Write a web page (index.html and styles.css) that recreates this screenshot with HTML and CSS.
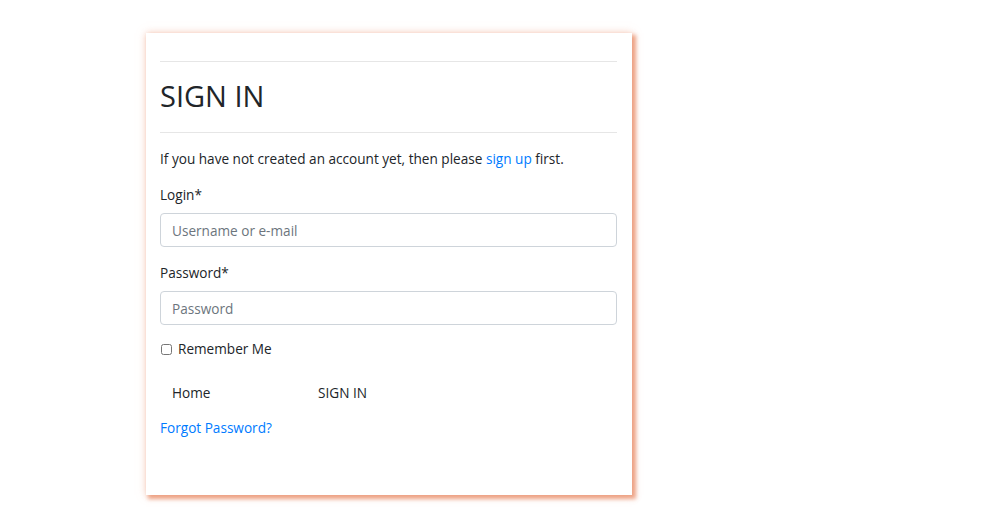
FILE: index.html
```html
<!DOCTYPE html>
<html lang="en">
<head>
<meta charset="utf-8">
<title>Sign In</title>
<link rel="stylesheet" href="styles.css">
</head>
<body>
<main class="page">
  <section class="card">
    <hr class="rule rule-top">
    <h1 class="title">SIGN IN</h1>
    <hr class="rule">
    <p class="intro">If you have not created an account yet, then please <a href="#" class="link">sign up</a> first.</p>
    <form class="form">
      <div class="field">
        <label class="label" for="login">Login*</label>
        <input class="input" id="login" type="text" placeholder="Username or e-mail">
      </div>
      <div class="field">
        <label class="label" for="password">Password*</label>
        <input class="input" id="password" type="password" placeholder="Password">
      </div>
      <label class="check"><input type="checkbox" class="checkbox"> Remember Me</label>
      <div class="actions">
        <a href="#" class="btn btn-home">Home</a>
        <button type="button" class="btn">SIGN IN</button>
      </div>
      <a href="#" class="link forgot">Forgot Password?</a>
    </form>
  </section>
</main>
</body>
</html>
```
FILE: styles.css
```css
* { box-sizing: border-box; }
html, body { margin: 0; padding: 0; background: #fff; }
body {
  font-family: "Open Sans", "Noto Sans", sans-serif;
  font-size: 13.6px;
  color: #212529;
  line-height: 1.5;
}
.page {
  padding: 33px 0 40px 146px;
}
.card {
  width: 486px;
  height: 462px;
  background: #fff;
  padding: 28px 15px 0 14px;
  box-shadow: 3px 3px 4px 1px rgba(234, 145, 110, 0.8), 0 0 8px rgba(240, 170, 140, 0.55);
}
.rule {
  border: 0;
  border-top: 1px solid #e6e6e6;
  margin: 0;
}
.title {
  font-size: 29px;
  font-weight: 400;
  margin: 0;
  padding: 13px 0 15px;
  line-height: 42px;
  letter-spacing: 0;
}
.intro {
  margin: 16px 0 0;
  line-height: 20px;
}
.link { color: #007bff; text-decoration: none; }
.form { display: flex; flex-direction: column; }
.field { display: flex; flex-direction: column; margin-top: 16px; }
.field + .field { margin-top: 16px; }
.label { line-height: 20px; margin-bottom: 8px; }
.input {
  height: 34px;
  border: 1px solid #ced4da;
  border-radius: 4px;
  padding: 0 11px;
  font: inherit;
  color: #495057;
}
.input::placeholder { color: #6c757d; opacity: 1; }
.check {
  display: flex;
  align-items: center;
  gap: 6px;
  margin-top: 14px;
  line-height: 20px;
  padding-left: 1px;
}
.checkbox { margin: 0; width: 11px; height: 11px; }
.actions {
  display: flex;
  margin-top: 24px;
}
.btn {
  font: inherit;
  color: #212529;
  background: transparent;
  border: 0;
  padding: 0 12px;
  line-height: 20px;
  text-decoration: none;
  cursor: pointer;
}
.btn-home { width: 146px; }
.forgot { margin-top: 15px; align-self: flex-start; line-height: 20px; }
```
